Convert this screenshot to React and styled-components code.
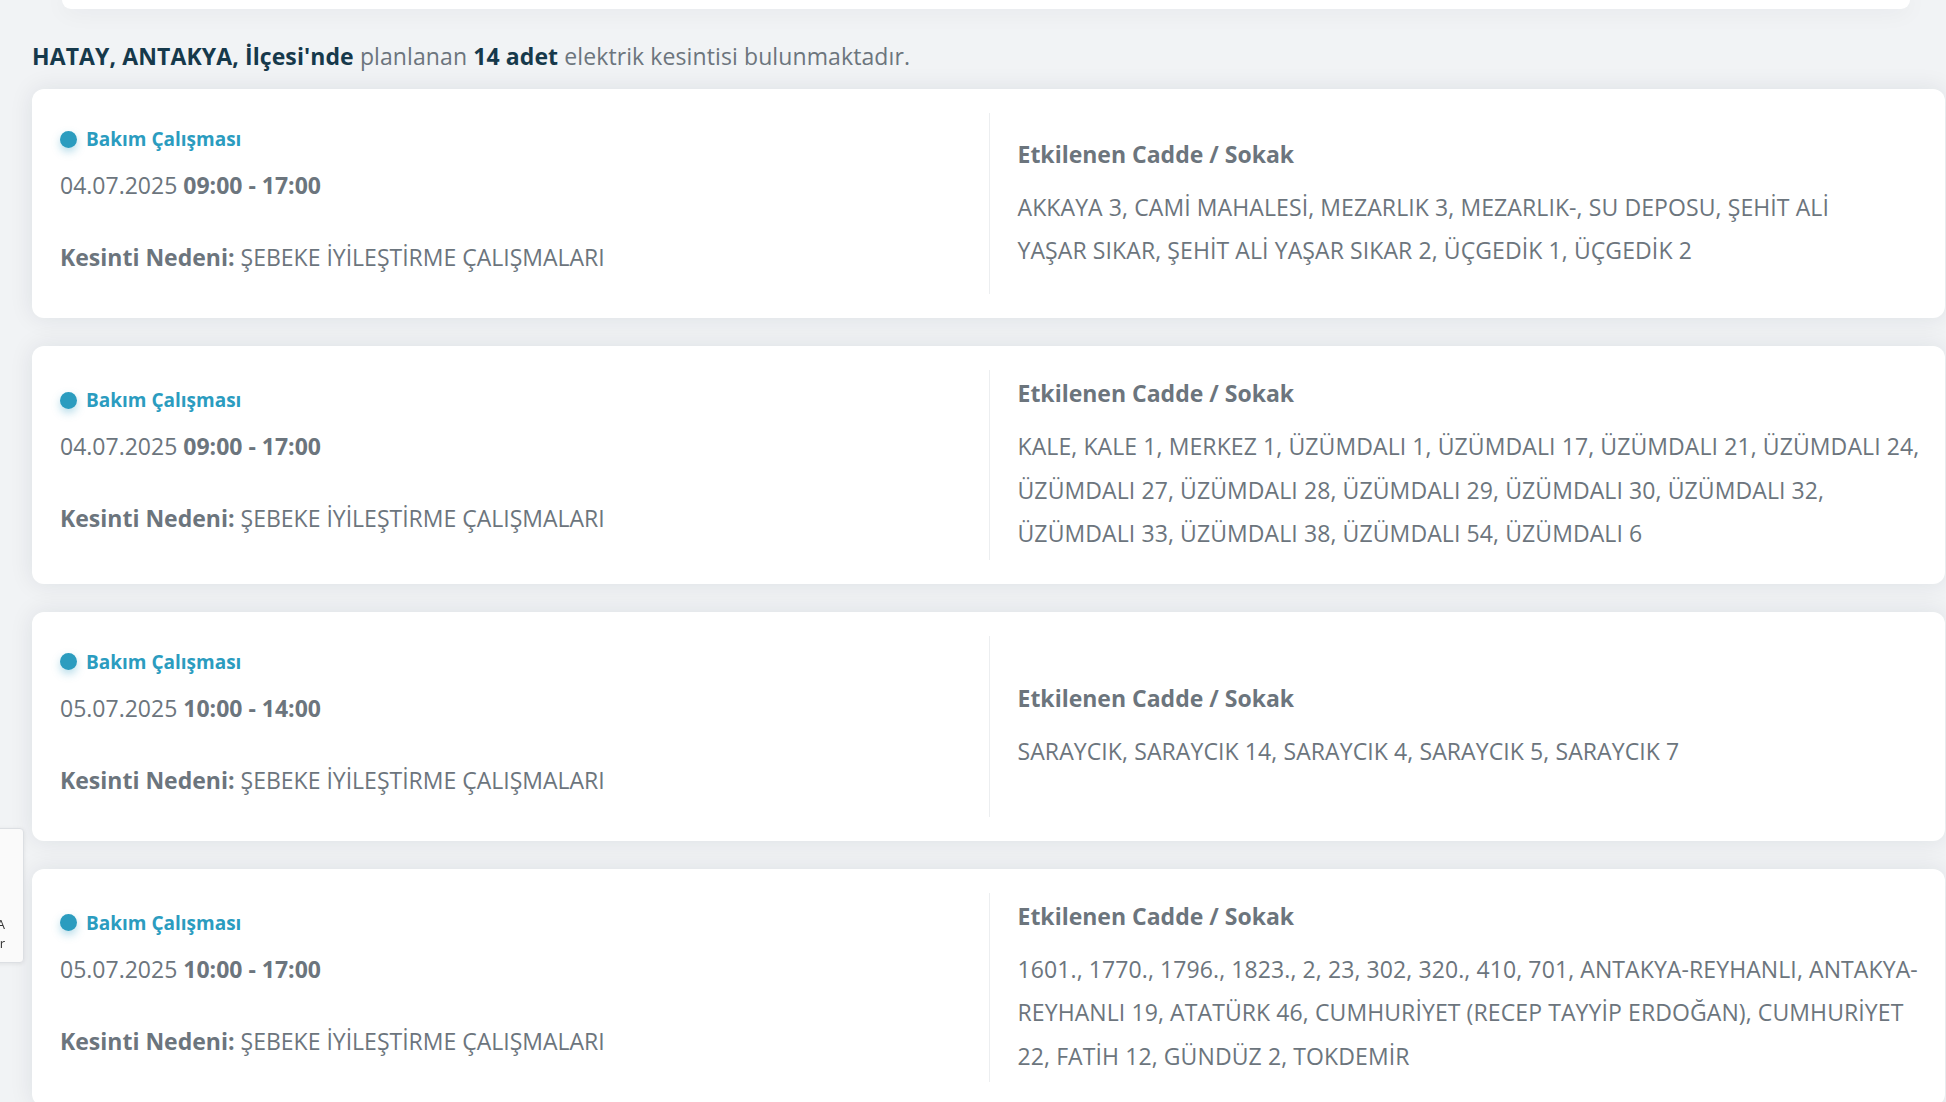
import styled, { createGlobalStyle } from 'styled-components'

const GlobalStyle = createGlobalStyle`
    html, body {
        margin: 0;
        padding: 0;
        overflow: hidden;
        background: #f1f3f5;
        font-family: "Open Sans", "Noto Sans", sans-serif;
    }
    * { box-sizing: border-box; }
`

const Page = styled.div`
    padding: 0 1px 0 32px;
`
const PrevCard = styled.div`
    height: 9px;
    margin-left: 30px;
    width: 1848px;
    background: #fff;
    border-radius: 0 0 12px 12px;
    box-shadow: 0 0 24px rgba(20, 30, 50, 0.09);
`
const Summary = styled.p`
    margin: 31px 0 16px;
    font-size: 23px;
    line-height: 33px;
    letter-spacing: 0.1px;
    color: #6c757d;
`
const Dark = styled.strong`
    color: #16394b;
    font-weight: 700;
`
const List = styled.div`
    display: flex;
    flex-direction: column;
    gap: 28px;
`
const Card = styled.div`
    display: grid;
    grid-template-columns: minmax(0, 1fr) minmax(0, 1fr);
    background: #fff;
    border-radius: 12px;
    padding: 24px 28px;
    box-shadow: 0 0 24px rgba(20, 30, 50, 0.09);
`
const Left = styled.div`
    display: flex;
    flex-direction: column;
    justify-content: center;
    padding: 11px 0 12px;
    color: #6c757d;
    font-size: 23px;
    line-height: 33px;
`
const Type = styled.div`
    display: flex;
    align-items: center;
    gap: 9px;
    font-size: 19px;
    line-height: 30px;
    font-weight: 700;
    color: #2b9cbf;
    margin-bottom: 15px;
`
const Dot = styled.span`
    width: 17px;
    height: 17px;
    border-radius: 50%;
    background: #2b9cbf;
    box-shadow: 0 4px 8px rgba(43, 156, 191, 0.35);
`
const DateLine = styled.div`
    margin-bottom: 39px;
`
const Reason = styled.div`
    margin-bottom: 8px;
`
const Right = styled.div`
    display: flex;
    flex-direction: column;
    justify-content: center;
    border-left: 1px solid #eceef0;
    padding: 7px 0 4px 28px;
    color: #6c757d;
`
const Title = styled.div`
    font-size: 23px;
    line-height: 33px;
    font-weight: 700;
    margin-bottom: 15px;
`
const StreetLine = styled.div`
    font-size: 23px;
    line-height: 43.5px;
    letter-spacing: 0.1px;
    white-space: nowrap;
`
const SideTab = styled.div`
    position: fixed;
    left: -96px;
    top: 828px;
    width: 120px;
    height: 135px;
    padding: 86px 18px 0 0;
    background: #fafafa;
    border: 1px solid #dcdfe3;
    border-radius: 4px;
    box-shadow: 0 1px 4px rgba(0, 0, 0, 0.08);
    text-align: right;
    font-size: 13px;
    line-height: 19px;
    color: #333;
`

// street lists, split the way the original page wraps them
const outages = [
    {
        date: '04.07.2025',
        time: '09:00 - 17:00',
        streets: [
            'AKKAYA 3, CAMİ MAHALESİ, MEZARLIK 3, MEZARLIK-, SU DEPOSU, ŞEHİT ALİ',
            'YAŞAR SIKAR, ŞEHİT ALİ YAŞAR SIKAR 2, ÜÇGEDİK 1, ÜÇGEDİK 2',
        ],
    },
    {
        date: '04.07.2025',
        time: '09:00 - 17:00',
        streets: [
            'KALE, KALE 1, MERKEZ 1, ÜZÜMDALI 1, ÜZÜMDALI 17, ÜZÜMDALI 21, ÜZÜMDALI 24,',
            'ÜZÜMDALI 27, ÜZÜMDALI 28, ÜZÜMDALI 29, ÜZÜMDALI 30, ÜZÜMDALI 32,',
            'ÜZÜMDALI 33, ÜZÜMDALI 38, ÜZÜMDALI 54, ÜZÜMDALI 6',
        ],
    },
    {
        date: '05.07.2025',
        time: '10:00 - 14:00',
        streets: ['SARAYCIK, SARAYCIK 14, SARAYCIK 4, SARAYCIK 5, SARAYCIK 7'],
    },
    {
        date: '05.07.2025',
        time: '10:00 - 17:00',
        streets: [
            '1601., 1770., 1796., 1823., 2, 23, 302, 320., 410, 701, ANTAKYA-REYHANLI, ANTAKYA-',
            'REYHANLI 19, ATATÜRK 46, CUMHURİYET (RECEP TAYYİP ERDOĞAN), CUMHURİYET',
            '22, FATİH 12, GÜNDÜZ 2, TOKDEMİR',
        ],
    },
]

const App = () => {
    return (
        <Page>
            <GlobalStyle />
            <PrevCard />
            <Summary>
                <Dark>HATAY, ANTAKYA, İlçesi'nde</Dark> planlanan <Dark>14 adet</Dark> elektrik kesintisi bulunmaktadır.
            </Summary>
            <List>
                {outages.map((o, i) => (
                    <Card key={i}>
                        <Left>
                            <Type><Dot />Bakım Çalışması</Type>
                            <DateLine>{o.date} <b>{o.time}</b></DateLine>
                            <Reason><b>Kesinti Nedeni:</b> ŞEBEKE İYİLEŞTİRME ÇALIŞMALARI</Reason>
                        </Left>
                        <Right>
                            <Title>Etkilenen Cadde / Sokak</Title>
                            {o.streets.map((line, j) => (
                                <StreetLine key={j}>{line}</StreetLine>
                            ))}
                        </Right>
                    </Card>
                ))}
            </List>
            <SideTab>A<br />r</SideTab>
        </Page>
    )
}

export default App
